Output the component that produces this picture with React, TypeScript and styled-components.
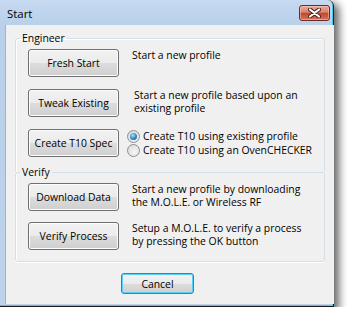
import React, {ReactElement} from 'react';
import styled, {createGlobalStyle} from 'styled-components';

const GlobalStyle = createGlobalStyle`
  html, body {
    margin: 0;
    padding: 0;
    background: #fff;
  }
  body {
    font-family: 'Open Sans', 'Noto Sans', sans-serif;
    font-size: 10.4px;
    color: #000;
  }
`;

const Window = styled.div`
  width: 333px;
  height: 306px;
  display: flex;
  flex-direction: column;
  background: linear-gradient(#c6daf1, #b9d0ea 25px, #bdd3ec);
  border-right: 1px solid #1b1b1b;
  border-bottom: 1px solid #1b1b1b;
  border-top-right-radius: 6px;
  box-shadow: inset -1px -1px 0 #3fcdf3, 4px 4px 9px 1px rgba(0, 0, 0, 0.6);
`;

const TitleBar = styled.div`
  height: 25px;
  display: flex;
  align-items: flex-start;
  justify-content: space-between;
  padding: 0 3px 0 7px;
`;

const Title = styled.div`
  margin-top: 6px;
  line-height: 16px;
  font-size: 11.4px;
`;

const CloseButton = styled.div`
  margin-top: 5px;
  width: 31px;
  height: 16px;
  box-sizing: border-box;
  border: 1px solid #6b2b22;
  border-radius: 3px;
  background: linear-gradient(#e9a998, #d88470 45%, #c5452f 50%, #d1735d);
  box-shadow: inset 0 0 0 1px rgba(255, 210, 200, 0.5);
  display: flex;
  align-items: center;
  justify-content: center;
`;

const Body = styled.div`
  flex: 1;
  display: flex;
  padding: 0 2px 2px 5px;
`;

const Client = styled.div`
  flex: 1;
  background: #f0f0f0;
  border-left: 1px solid #9fb3ca;
  padding: 0 9px;
  display: flex;
  flex-direction: column;
  white-space: nowrap;
`;

const Group = styled.fieldset<{$first?: boolean}>`
  margin: ${p => (p.$first ? '6px 0 0' : '-7px 0 0')};
  padding: 0;
  min-width: 0;
  border: 1px solid #d5dfe5;
  border-bottom: ${p => (p.$first ? 'none' : '1px solid #d5dfe5')};
  border-radius: ${p => (p.$first ? '3px 3px 0 0' : '3px')};
  box-shadow: ${p => (p.$first ? 'inset 1px 1px 0 #fff' : 'inset 1px 0 0 #fff, 0 1px 0 #fff')};
`;

const Legend = styled.legend`
  margin-left: 4px;
  padding: 0 2px;
  line-height: 14px;
`;

const Rows = styled.div<{$last?: boolean}>`
  display: flex;
  flex-direction: column;
  gap: ${p => (p.$last ? '11px' : '12px')};
  padding: ${p => (p.$last ? '4px 12px 11px' : '4px 12px 15px')};
`;

const Row = styled.div`
  display: flex;
  align-items: flex-start;
`;

const Button = styled.button<{$default?: boolean}>`
  flex: none;
  width: ${p => (p.$default ? '73px' : '91px')};
  height: ${p => (p.$default ? '21px' : '28px')};
  padding: 0;
  font: inherit;
  color: #000;
  border: 1px solid ${p => (p.$default ? '#3c7fb1' : '#707070')};
  border-radius: 3px;
  background: linear-gradient(#f2f2f2, #ebebeb 50%, #dddddd 50%, #cfcfcf);
  box-shadow: inset 0 0 0 1px ${p => (p.$default ? '#5ad0f7' : '#fcfcfc')};
`;

const Description = styled.div<{$indent?: number}>`
  margin-left: ${p => 13 + (p.$indent || 0)}px;
  line-height: 13px;
`;

const RadioGroup = styled.div`
  margin-left: 8px;
  height: 28px;
  display: flex;
  flex-direction: column;
  justify-content: center;
`;

const RadioRow = styled.label`
  height: 18px;
  display: flex;
  align-items: center;
  gap: 3px;
  line-height: 13px;
`;

const RadioDot = styled.span<{$checked?: boolean}>`
  width: 13px;
  height: 13px;
  box-sizing: border-box;
  border-radius: 50%;
  border: 1px solid #8c8e90;
  background: radial-gradient(circle at 60% 65%, #f6f6f6, #d6d6d6);
  display: flex;
  align-items: center;
  justify-content: center;
  &::after {
    content: '';
    display: ${p => (p.$checked ? 'block' : 'none')};
    width: 7px;
    height: 7px;
    border-radius: 50%;
    background: radial-gradient(circle at 40% 35%, #a6e4fc, #2a86c4 55%, #14507f);
  }
`;

const Footer = styled.div`
  display: flex;
  margin-top: 11px;
  padding-left: 106px;
`;

export default function App(): ReactElement {
  return (
    <>
      <GlobalStyle />
      <Window>
        <TitleBar>
          <Title>Start</Title>
          <CloseButton>
            <svg width="13" height="10" viewBox="0 0 13 10">
              <path d="M2 1.5 L11 8.5 M11 1.5 L2 8.5" stroke="#4a1c16" strokeWidth="4" strokeLinecap="round" />
              <path d="M2 1.5 L11 8.5 M11 1.5 L2 8.5" stroke="#fff" strokeWidth="2.2" strokeLinecap="round" />
            </svg>
          </CloseButton>
        </TitleBar>
        <Body>
          <Client>
            <Group $first>
              <Legend>Engineer</Legend>
              <Rows>
                <Row>
                  <Button>Fresh Start</Button>
                  <Description>Start a new profile</Description>
                </Row>
                <Row>
                  <Button>Tweak Existing</Button>
                  <Description $indent={2}>
                    Start a new profile based upon an
                    <br />
                    existing profile
                  </Description>
                </Row>
                <Row>
                  <Button>Create T10 Spec</Button>
                  <RadioGroup>
                    <RadioRow>
                      <RadioDot $checked />
                      Create T10 using existing profile
                    </RadioRow>
                    <RadioRow>
                      <RadioDot />
                      Create T10 using an OvenCHECKER
                    </RadioRow>
                  </RadioGroup>
                </Row>
              </Rows>
            </Group>
            <Group>
              <Legend>Verify</Legend>
              <Rows $last>
                <Row>
                  <Button>Download Data</Button>
                  <Description>
                    Start a new profile by downloading
                    <br />
                    the M.O.L.E. or Wireless RF
                  </Description>
                </Row>
                <Row>
                  <Button>Verify Process</Button>
                  <Description>
                    Setup a M.O.L.E. to verify a process
                    <br />
                    by pressing the OK button
                  </Description>
                </Row>
              </Rows>
            </Group>
            <Footer>
              <Button $default>Cancel</Button>
            </Footer>
          </Client>
        </Body>
      </Window>
    </>
  );
}
